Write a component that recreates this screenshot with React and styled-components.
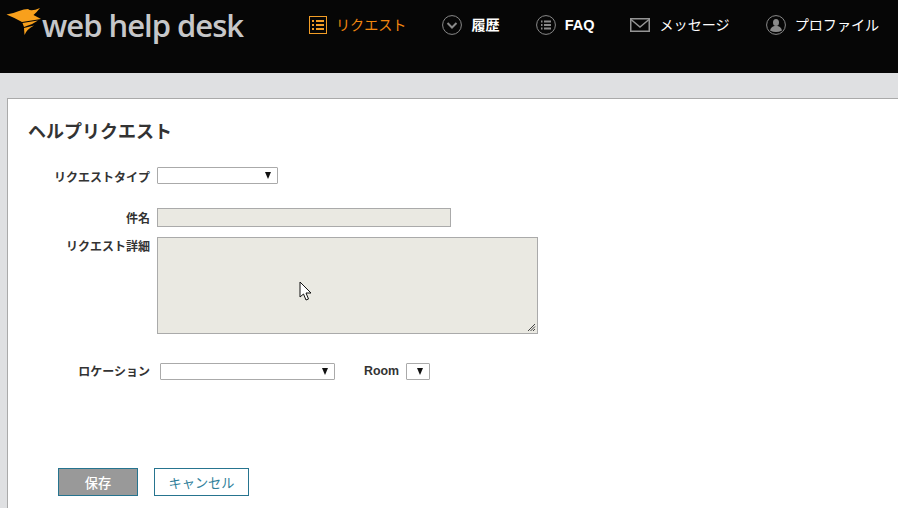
import React from 'react';
import styled, { createGlobalStyle } from 'styled-components';

const GlobalStyle = createGlobalStyle`
  html, body {
    margin: 0;
    padding: 0;
    height: 508px;
    overflow: hidden;
    background: #dfe0e2;
    font-family: "Liberation Sans", "Noto Sans CJK JP", sans-serif;
  }
`;

const Page = styled.div`
  display: flex;
  flex-direction: column;
  height: 508px;
`;

const Header = styled.header`
  display: flex;
  align-items: flex-start;
  height: 73px;
  flex: none;
  background: #060606;
`;

const Logo = styled.div`
  display: flex;
  align-items: flex-start;
  width: 309px;
  padding: 8px 0 0 6px;
  box-sizing: border-box;
`;

const LogoText = styled.span`
  font-family: "Open Sans", sans-serif;
  font-weight: 600;
  font-size: 31px;
  line-height: 34px;
  letter-spacing: -1px;
  color: #c6c7c9;
  white-space: nowrap;
`;

const Nav = styled.nav`
  display: flex;
  gap: 36px;
  height: 50px;
  align-items: center;
`;

const NavItem = styled.a`
  display: flex;
  align-items: center;
  gap: 9px;
  font-size: 14.1px;
  font-weight: ${p => (p.$bold ? 700 : 400)};
  color: ${p => (p.$active ? '#f2860f' : '#ffffff')};
  white-space: nowrap;
  font-family: "Noto Sans CJK JP", sans-serif;
`;

const NavLabel = styled.span`
  margin-bottom: ${p => (p.$latin ? 0 : 2)}px;
  font-family: ${p => (p.$latin ? '"Liberation Sans", sans-serif' : 'inherit')};
  font-size: ${p => (p.$latin ? '14.5px' : 'inherit')};
`;

const Main = styled.main`
  flex: 1;
  padding: 25px 0 0 7px;
  display: flex;
`;

const Panel = styled.section`
  flex: 1;
  background: #fff;
  border-top: 1px solid #aaa;
  border-left: 1px solid #aaa;
  padding: 20px 0 0 20px;
  position: relative;
`;

const Title = styled.h1`
  margin: 0 0 25px;
  font-family: "Noto Sans CJK JP", sans-serif;
  font-size: 18px;
  line-height: 22px;
  font-weight: 700;
  color: #333;
`;

const Row = styled.div`
  display: flex;
  align-items: ${p => (p.$top ? 'flex-start' : 'center')};
  margin-top: ${p => p.$mt || 0}px;
`;

const Label = styled.label`
  width: 122px;
  margin-top: ${p => p.$drop || 0}px;
  margin-bottom: ${p => -(p.$drop || 0)}px;
  margin-right: ${p => p.$gap || 7}px;
  text-align: right;
  font-family: "Noto Sans CJK JP", sans-serif;
  font-size: 12px;
  font-weight: 700;
  line-height: 18px;
  color: #333;
  white-space: nowrap;
`;

const Select = styled.div`
  display: flex;
  align-items: center;
  justify-content: flex-end;
  box-sizing: border-box;
  width: ${p => p.$w}px;
  height: 17px;
  border: 1px solid #aaa;
  border-radius: 1px;
  background: #fff;
  padding-right: 6px;
  color: #111;

  &::after {
    content: "";
    border-left: 3.5px solid transparent;
    border-right: 3.5px solid transparent;
    border-top: 7px solid #111;
  }
`;

const TextInput = styled.input`
  box-sizing: border-box;
  width: 294px;
  height: 19px;
  margin: 0;
  padding: 0;
  border: 1px solid #aaa;
  border-radius: 0;
  background: #eae9e2;
  outline: none;
`;

const AreaWrap = styled.div`
  position: relative;
  width: 381px;
  height: 97px;
`;

const TextArea = styled.textarea`
  display: block;
  box-sizing: border-box;
  width: 100%;
  height: 100%;
  margin: 0;
  padding: 0;
  border: 1px solid #aaa;
  border-radius: 0;
  background: #eae9e2;
  outline: none;
  resize: none;
`;

const Grip = styled.svg`
  position: absolute;
  right: 2px;
  bottom: 2px;
`;

const RoomLabel = styled.span`
  margin: 0 7px 0 29px;
  font-size: 12.4px;
  font-weight: 700;
  color: #333;
`;

const Buttons = styled.div`
  display: flex;
  gap: 16px;
  margin: 88px 0 0 30px;
`;

const Button = styled.button`
  box-sizing: border-box;
  width: ${p => p.$w}px;
  height: 28px;
  margin: 0;
  padding: 0;
  border: 1px solid #26748f;
  border-radius: 0;
  background: ${p => (p.$primary ? '#999999' : '#ffffff')};
  color: ${p => (p.$primary ? '#ffffff' : '#2f7f9b')};
  font-family: "Noto Sans CJK JP", sans-serif;
  font-size: 13.2px;
  font-weight: ${p => (p.$primary ? 500 : 400)};
`;

const Cursor = styled.svg`
  position: absolute;
  left: 291px;
  top: 182px;
`;

const Flame = () => (
  <svg width="36" height="28" viewBox="0 0 36 28" style={{ flex: 'none' }}>
    <path fill="#f8a01c" d="M0.5 6.5 Q8 5 13 3 Q18 1 22 1 Q25 4 34 0 Q31 4 27.5 7 L35 11 L16 14 Q9 10 0.5 6.5 Z" />
    <path fill="#f8a01c" d="M16.5 15 L32 12.5 Q26 17 18 19 Z" />
    <path fill="#f8a01c" d="M18 20 L28 17.5 Q21 21 18.5 27 Z" />
  </svg>
);

const ListIcon = () => (
  <svg width="18" height="18" viewBox="0 0 18 18">
    <rect x="0.5" y="0.5" width="17" height="17" fill="none" stroke="#f29d26" />
    <path stroke="#f29d26" strokeWidth="2" d="M3 5h2M7 5h8M3 9h2M7 9h8M3 13h2M7 13h8" />
  </svg>
);

const ChevronIcon = () => (
  <svg width="20" height="20" viewBox="0 0 20 20">
    <circle cx="10" cy="10" r="9.4" fill="none" stroke="#8a8a8a" />
    <path d="M5.5 8 L10 12.5 L14.5 8" fill="none" stroke="#8a8a8a" strokeWidth="2" />
  </svg>
);

const CircleListIcon = () => (
  <svg width="20" height="20" viewBox="0 0 20 20">
    <circle cx="10" cy="10" r="9.4" fill="none" stroke="#8a8a8a" />
    <path stroke="#8a8a8a" strokeWidth="1.8" d="M5 6.5h1.5M8 6.5h7M5 10h1.5M8 10h7M5 13.5h1.5M8 13.5h7" />
  </svg>
);

const MailIcon = () => (
  <svg width="20" height="14" viewBox="0 0 20 14">
    <rect x="0.75" y="0.75" width="18.5" height="12.5" fill="none" stroke="#949494" strokeWidth="1.5" />
    <path d="M1 1.5 L10 9 L19 1.5" fill="none" stroke="#949494" strokeWidth="1.5" />
  </svg>
);

const UserIcon = () => (
  <svg width="20" height="20" viewBox="0 0 20 20">
    <circle cx="10" cy="10" r="9.4" fill="none" stroke="#8a8a8a" />
    <ellipse cx="10" cy="7.5" rx="3" ry="3.6" fill="#8a8a8a" />
    <path d="M4 15.5 Q5 11.5 8.5 11 L11.5 11 Q15 11.5 16 15.5 Q10 18.5 4 15.5 Z" fill="#8a8a8a" />
  </svg>
);

export default function App() {
  return (
    <Page>
      <GlobalStyle />
      <Header>
        <Logo>
          <Flame />
          <LogoText>web help desk</LogoText>
        </Logo>
        <Nav>
          <NavItem $active><ListIcon /><NavLabel>リクエスト</NavLabel></NavItem>
          <NavItem $bold><ChevronIcon /><NavLabel>履歴</NavLabel></NavItem>
          <NavItem $bold><CircleListIcon /><NavLabel $latin>FAQ</NavLabel></NavItem>
          <NavItem><MailIcon /><NavLabel>メッセージ</NavLabel></NavItem>
          <NavItem><UserIcon /><NavLabel>プロファイル</NavLabel></NavItem>
        </Nav>
      </Header>
      <Main>
        <Panel>
          <Title>ヘルプリクエスト</Title>
          <Row>
            <Label $drop={2}>リクエストタイプ</Label>
            <Select $w={121} />
          </Row>
          <Row $mt={24}>
            <Label>件名</Label>
            <TextInput readOnly />
          </Row>
          <Row $top $mt={10}>
            <Label>リクエスト詳細</Label>
            <AreaWrap>
              <TextArea readOnly />
              <Grip width="9" height="9" viewBox="0 0 9 9">
                <path d="M8 1 L1 8 M8 3.5 L3.5 8 M8 6 L6 8" stroke="#444" strokeWidth="1" fill="none" />
              </Grip>
            </AreaWrap>
          </Row>
          <Row $mt={28}>
            <Label $gap={10}>ロケーション</Label>
            <Select $w={175} />
            <RoomLabel>Room</RoomLabel>
            <Select $w={24} />
          </Row>
          <Buttons>
            <Button $primary $w={80}>保存</Button>
            <Button $w={95}>キャンセル</Button>
          </Buttons>
          <Cursor width="14" height="21" viewBox="0 0 14 21">
            <path d="M1 1 L1 16 L4.5 13 L7 19 L9.5 18 L7 12 L12 12 Z" fill="#fff" stroke="#111" strokeWidth="1" />
          </Cursor>
        </Panel>
      </Main>
    </Page>
  );
}
